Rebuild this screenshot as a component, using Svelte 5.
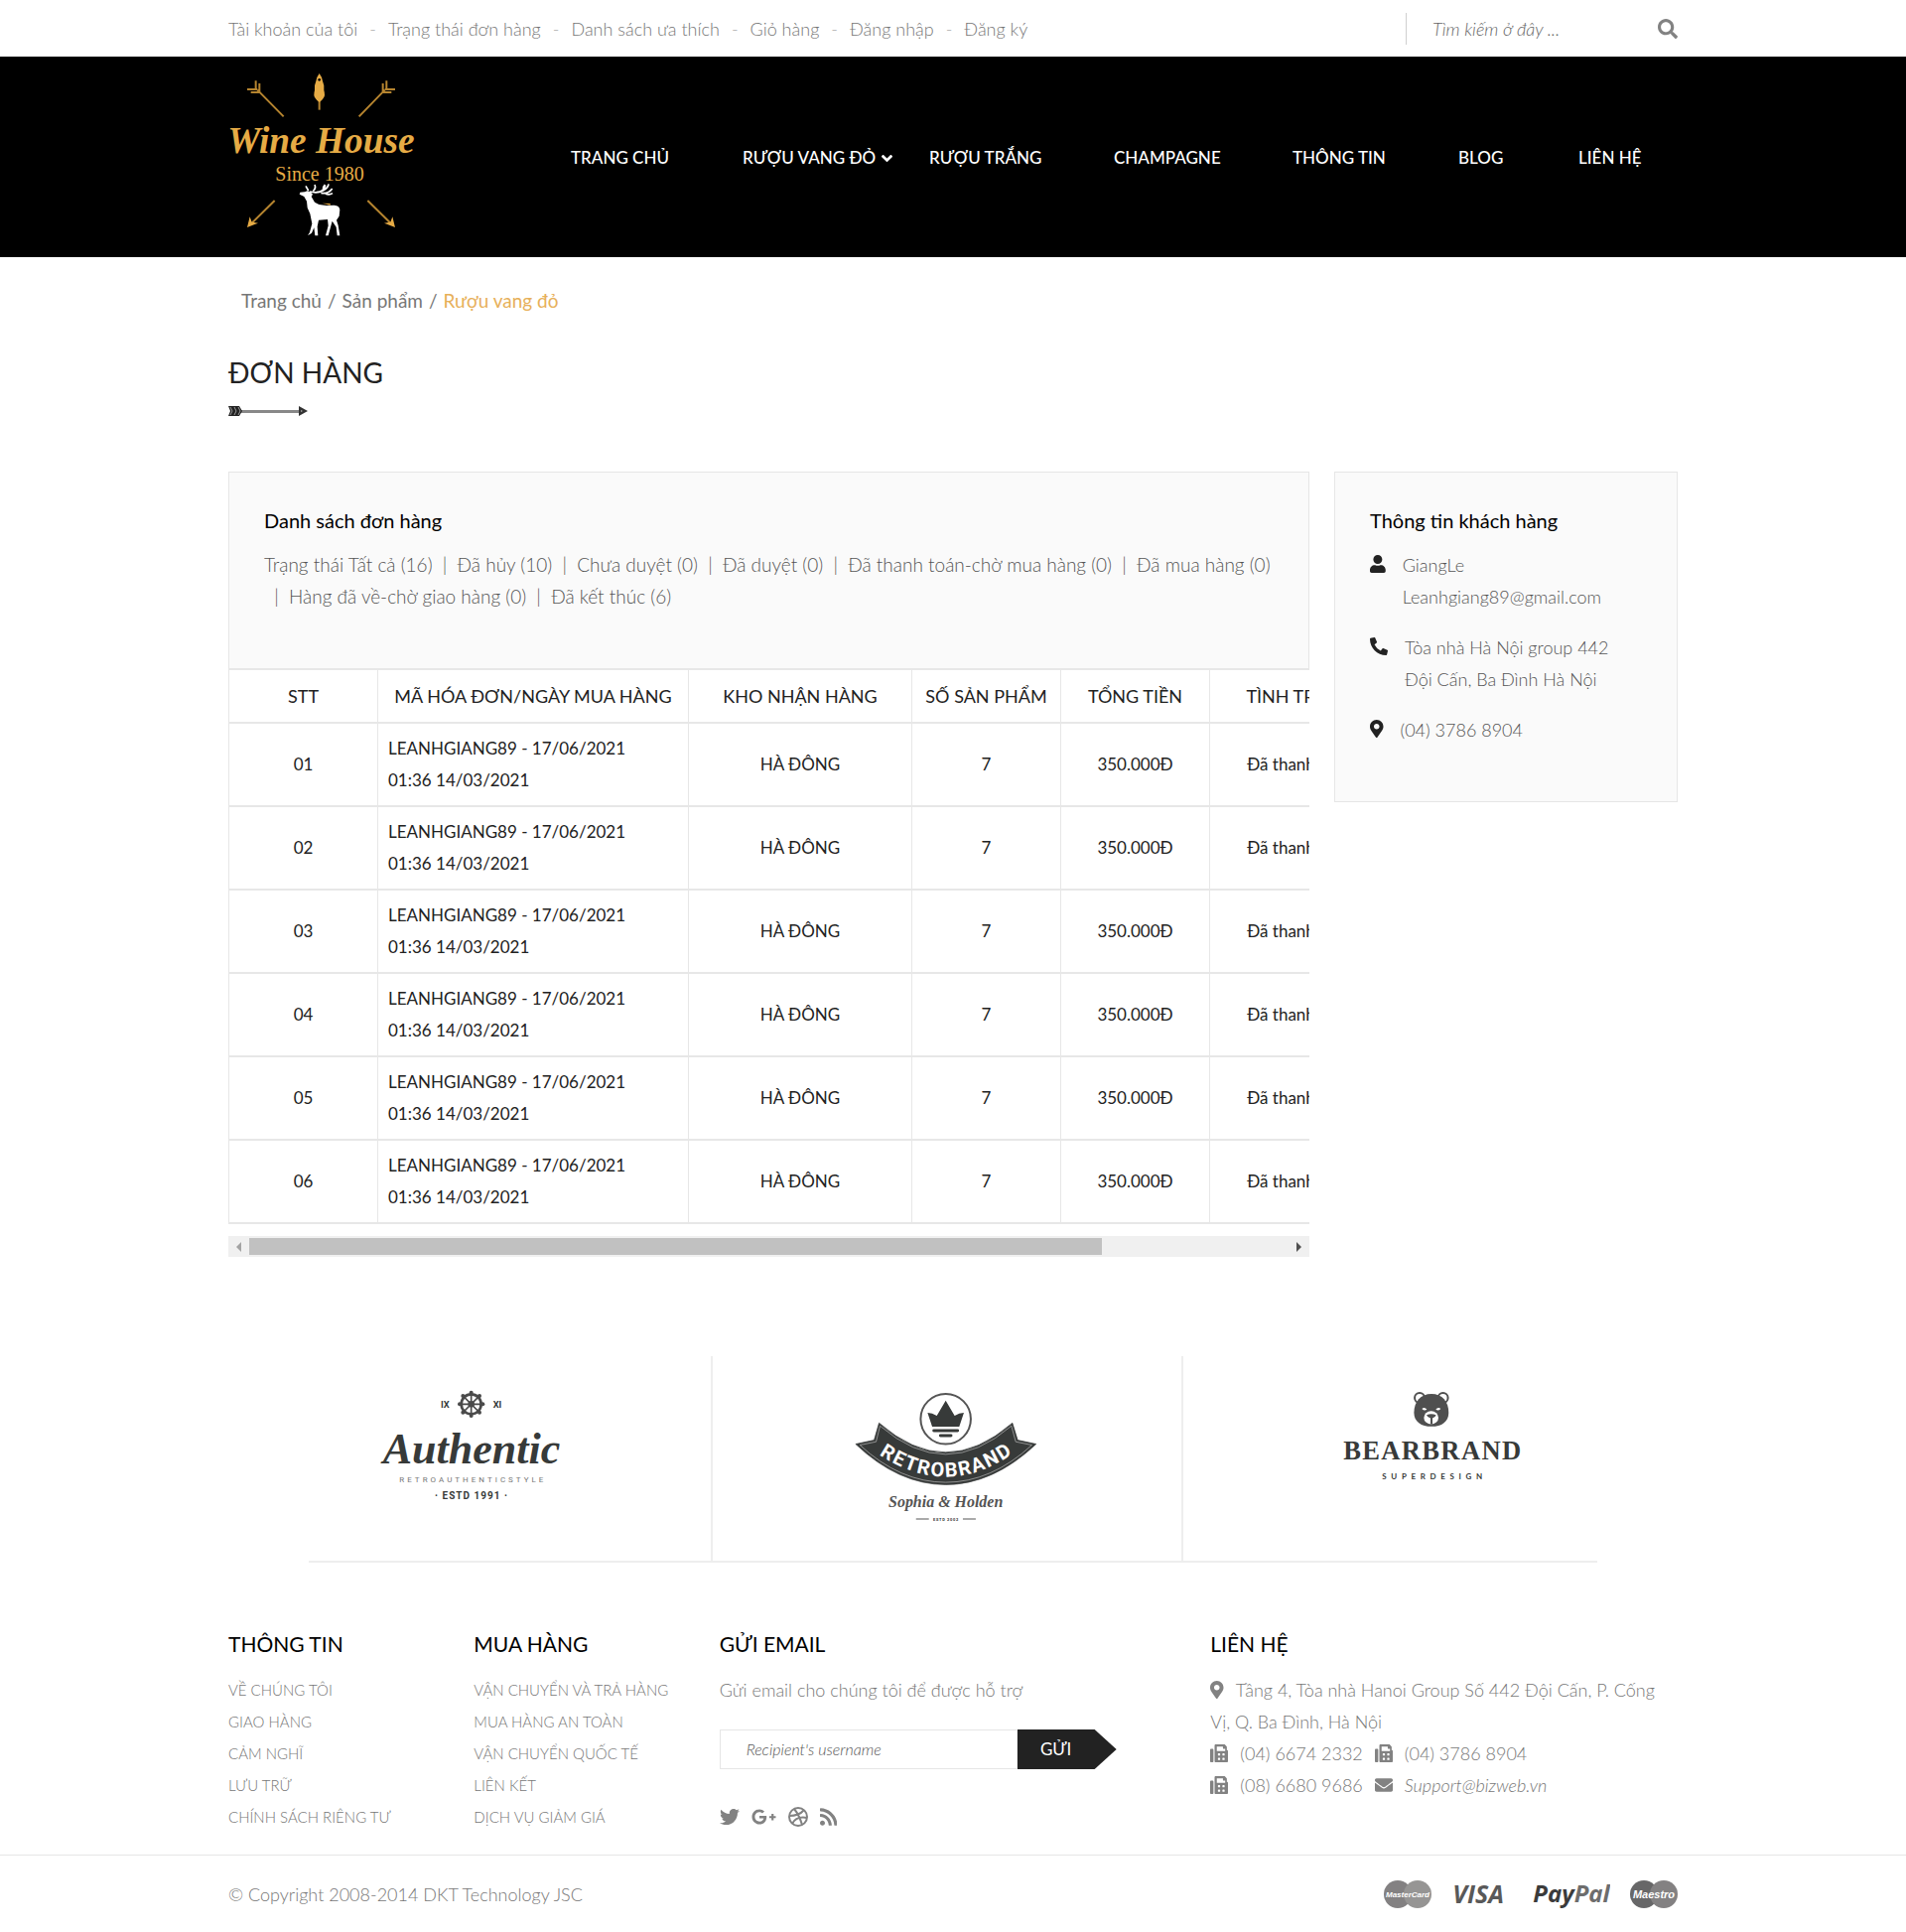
<script>
  const accountLinks = ['Tài khoản của tôi', 'Trạng thái đơn hàng', 'Danh sách ưa thích', 'Giỏ hàng', 'Đăng nhập', 'Đăng ký'];
  const menu = ['TRANG CHỦ', 'RƯỢU VANG ĐỎ', 'RƯỢU TRẮNG', 'CHAMPAGNE', 'THÔNG TIN', 'BLOG', 'LIÊN HỆ'];
  const statuses = [
    'Trạng thái Tất cả (16)',
    'Đã hủy (10)',
    'Chưa duyệt (0)',
    'Đã duyệt (0)',
    'Đã thanh toán-chờ mua hàng (0)',
    'Đã mua hàng (0)',
    'Hàng đã về-chờ giao hàng (0)',
    'Đã kết thúc (6)'
  ];
  const orders = ['01', '02', '03', '04', '05', '06'];
  const infoLinks = ['VỀ CHÚNG TÔI', 'GIAO HÀNG', 'CẢM NGHĨ', 'LƯU TRỮ', 'CHÍNH SÁCH RIÊNG TƯ'];
  const shopLinks = ['VẬN CHUYỂN VÀ TRẢ HÀNG', 'MUA HÀNG AN TOÀN', 'VẬN CHUYỂN QUỐC TẾ', 'LIÊN KẾT', 'DỊCH VỤ GIẢM GIÁ'];

  const icons = {
    search: ['0 0 512 512', 'M505 442.700L405.300 343c-4.500-4.500-10.600-7-17-7H372c27.600-35.300 44-79.700 44-128C416 93.100 322.900 0 208 0S0 93.100 0 208s93.100 208 208 208c48.300 0 92.700-16.400 128-44v16.300c0 6.400 2.500 12.500 7 17l99.700 99.700c9.400 9.400 24.600 9.400 33.900 0l28.300-28.300c9.400-9.400 9.400-24.600.1-34zM208 336c-70.700 0-128-57.200-128-128 0-70.700 57.200-128 128-128 70.700 0 128 57.200 128 128 0 70.700-57.200 128-128 128z'],
    down: ['0 96 320 320', 'M143 352.300L7 216.300c-9.400-9.400-9.400-24.600 0-33.900l22.600-22.600c9.400-9.400 24.600-9.400 33.900 0l96.400 96.400 96.400-96.400c9.400-9.400 24.600-9.400 33.900 0l22.600 22.600c9.400 9.400 9.400 24.600 0 33.900l-136 136c-9.200 9.400-24.400 9.400-33.800 0z'],
    user: ['0 0 448 512', 'M224 256c70.700 0 128-57.300 128-128S294.700 0 224 0 96 57.300 96 128s57.300 128 128 128zm89.600 32h-16.700c-22.200 10.200-46.900 16-72.900 16s-50.600-5.800-72.900-16h-16.700C60.200 288 0 348.200 0 422.400V464c0 26.500 21.500 48 48 48h352c26.500 0 48-21.500 48-48v-41.600c0-74.200-60.200-134.400-134.400-134.400z'],
    phone: ['0 0 512 512', 'M497.390 361.800l-112-48a24 24 0 0 0-28 6.900l-49.600 60.600A370.660 370.660 0 0 1 130.600 204.110l60.600-49.600a23.940 23.940 0 0 0 6.900-28l-48-112A24.160 24.160 0 0 0 122.600.610l-104 24A24 24 0 0 0 0 48c0 256.500 207.900 464 464 464a24 24 0 0 0 23.400-18.600l24-104a24.290 24.290 0 0 0-14.010-27.600z'],
    pin: ['0 0 384 512', 'M172.268 501.670C26.970 291.031 0 269.413 0 192 0 85.961 85.961 0 192 0s192 85.961 192 192c0 77.413-26.970 99.031-172.268 309.670-9.535 13.774-29.930 13.773-39.464 0zM192 272c44.183 0 80-35.817 80-80s-35.817-80-80-80-80 35.817-80 80 35.817 80 80 80z'],
    fax: ['0 0 512 512', 'M64 128H32c-17.670 0-32 14.330-32 32v320c0 17.670 14.330 32 32 32h32c17.670 0 32-14.330 32-32V160c0-17.670-14.330-32-32-32zm416 32V77.250c0-8.490-3.370-16.620-9.370-22.630L425.370 9.370c-6-6-14.140-9.370-22.630-9.370H160c-17.670 0-32 14.330-32 32v448c0 17.670 14.330 32 32 32h320c17.670 0 32-14.330 32-32V192c0-17.670-14.330-32-32-32zM288 432c0 8.840-7.160 16-16 16h-32c-8.840 0-16-7.160-16-16v-32c0-8.840 7.160-16 16-16h32c8.840 0 16 7.160 16 16v32zm0-128c0 8.840-7.160 16-16 16h-32c-8.840 0-16-7.160-16-16v-32c0-8.840 7.160-16 16-16h32c8.840 0 16 7.160 16 16v32zm128 128c0 8.840-7.160 16-16 16h-32c-8.840 0-16-7.160-16-16v-32c0-8.840 7.160-16 16-16h32c8.840 0 16 7.160 16 16v32zm0-128c0 8.840-7.160 16-16 16h-32c-8.840 0-16-7.160-16-16v-32c0-8.840 7.160-16 16-16h32c8.840 0 16 7.160 16 16v32zM432 192H192V64h176v48c0 8.840 7.160 16 16 16h48z'],
    mail: ['0 0 512 512', 'M502.300 190.800c3.900-3.100 9.700-.2 9.700 4.700V400c0 26.500-21.500 48-48 48H48c-26.500 0-48-21.500-48-48V195.600c0-5 5.700-7.800 9.700-4.700 22.400 17.400 52.100 39.500 154.100 113.600 21.100 15.400 56.700 47.800 92.200 47.600 35.700.3 72-32.800 92.300-47.600 102-74.100 131.600-96.300 154-113.700zM256 320c23.200.4 56.600-29.200 73.400-41.400 132.700-96.300 142.800-104.700 173.400-128.700 5.800-4.500 9.200-11.500 9.200-18.900v-19c0-26.500-21.500-48-48-48H48c-26.500 0-48 21.500-48 48v19c0 7.400 3.400 14.300 9.200 18.900 30.600 23.900 40.700 32.400 173.400 128.700 16.800 12.200 50.200 41.800 73.400 41.400z'],
    twitter: ['0 0 512 512', 'M459.370 151.716c.325 4.548.325 9.097.325 13.645 0 138.720-105.583 298.558-298.558 298.558-59.452 0-114.680-17.219-161.137-47.106 8.447.974 16.568 1.299 25.340 1.299 49.055 0 94.213-16.568 130.274-44.832-46.132-.975-84.792-31.188-98.112-72.772 6.498.974 12.995 1.624 19.818 1.624 9.421 0 18.843-1.300 27.614-3.573-48.081-9.747-84.143-51.980-84.143-102.985v-1.299c13.969 7.797 30.214 12.670 47.431 13.319-28.264-18.843-46.781-51.005-46.781-87.391 0-19.492 5.197-37.360 14.294-52.954 51.655 63.675 129.300 105.258 216.365 109.807-1.624-7.797-2.599-15.918-2.599-24.040 0-57.828 46.782-104.934 104.934-104.934 30.213 0 57.502 12.670 76.670 33.137 23.715-4.548 46.456-13.320 66.599-25.340-7.798 24.366-24.366 44.833-46.132 57.827 21.117-2.273 41.584-8.122 60.426-16.243-14.292 20.791-32.161 39.308-52.628 54.253z'],
    google: ['0 0 640 512', 'M386.061 228.496c1.834 9.692 3.143 19.384 3.143 31.956C389.204 370.205 315.599 448 204.800 448c-106.084 0-192-85.915-192-192s85.916-192 192-192c51.864 0 95.083 18.859 128.611 50.292l-52.126 50.030c-14.145-13.621-39.028-29.599-76.485-29.599-65.484 0-118.920 54.221-118.920 121.277 0 67.056 53.436 121.277 118.920 121.277 75.961 0 104.513-54.745 108.965-82.773H204.800v-66.009h181.261zm185.406 6.437V179.200h-56.001v55.733h-55.733v56.001h55.733v55.733h56.001v-55.733H627.200v-56.001h-55.733z'],
    rss: ['0 0 448 512', 'M128.081 415.959c0 35.369-28.672 64.041-64.041 64.041S0 451.328 0 415.959s28.672-64.041 64.041-64.041 64.040 28.673 64.040 64.041zm175.660 47.250c-8.354-154.600-132.185-278.587-286.950-286.950C7.656 175.765 0 183.105 0 192.253v48.069c0 8.415 6.490 15.472 14.887 16.018 111.832 7.284 201.473 96.702 208.772 208.772.547 8.397 7.604 14.887 16.018 14.887h48.069c9.149.001 16.489-7.655 15.995-16.790zm144.249.288C439.596 229.677 251.465 40.445 16.503 32.010 7.473 31.686 0 38.981 0 48.016v48.068c0 8.625 6.835 15.645 15.453 15.999 191.179 7.839 344.627 161.316 352.465 352.465.353 8.618 7.373 15.453 15.999 15.453h48.068c9.034-.001 16.329-7.474 16.005-16.504z']
  };

  let scroller;
  let scrollLeft = $state(0);
  let contentWidth = $state(1327);
  let viewWidth = $state(1089);
  let thumbWidth = $derived(Math.min(100, (viewWidth / contentWidth) * 100));
  let thumbLeft = $derived((scrollLeft / contentWidth) * 100);

  function move(step) {
    scroller.scrollLeft += step;
  }
</script>

{#snippet icon(name, cls)}
  <svg class="icon {cls}" viewBox={icons[name][0]} aria-hidden="true"><path d={icons[name][1]} /></svg>
{/snippet}

<div class="topbar">
  <div class="container topbar-row">
    <ul class="account">
      {#each accountLinks as link}
        <li><a href="#account">{link}</a></li>
      {/each}
    </ul>
    <form class="search" onsubmit={(e) => e.preventDefault()}>
      <input type="search" aria-label="Tìm kiếm" placeholder="Tìm kiếm ở đây ..." />
      <button type="submit" aria-label="Tìm">{@render icon('search', 'i20')}</button>
    </form>
  </div>
</div>

<header>
  <div class="container header-row">
    <a class="logo" href="#home" aria-label="Wine House">
      <svg viewBox="30 30 570 510" width="190" height="170">
        <g fill="none" stroke="#b5842f" stroke-width="6">
          <path d="M197 172L118 92M87 90h31M113 64v28M98 99h27M124 72v27" />
          <path d="M425 172L503 92M534 90h-31M508 64v28M523 99h-27M497 72v27" />
          <path d="M170 426L100 495M451 426L521 495" />
          <path d="M305 120v32" />
        </g>
        <g fill="#e6ab45">
          <path d="M305 42q9 12 10 23q6 12 4 28q5 16-2 24q-5 8-12 12q-7-4-12-12q-7-8-2-24q-2-16 4-28q1-11 10-23z" />
          <path d="M87 507l8-32 6 16 19 3zM534 507l-8-32-6 16-19 3z" />
        </g>
        <circle cx="305" cy="61" r="4" fill="#000" />
        <text class="script" x="310" y="283">Wine House</text>
        <text class="since" x="306" y="365">Since 1980</text>
        <path fill="#fff" d="M245 403l2-6 14-1 8-3 9 3 7 7-4 7 10 17 13 7 22 3 24-1q16 1 17 14l-2 19-8 12 5 16 5 31h-8l-3-26-12-18-6 22-6 22h-8l8-30-2-19-27 2-4 20 2 27h-9l-3-24-7 16-12 8 6-10 7-26-6-30-8-18-2-20-8-14z" transform="translate(0 4)" />
        <path fill="none" stroke="#fff" stroke-width="5" d="M272 396l-8-14M276 399q24 6 40-3t17-20M296 401q24-2 27-22M310 403q22 4 34-13M286 397q10-8 5-19M318 395q-4-8 4-17M324 406q12 4 21-2" />
        <path fill="#e6ab45" d="M314 434l24 1v5z" />
      </svg>
    </a>
    <nav>
      {#each menu as item, i}
        <a href="#menu">{item}{#if i === 1}{@render icon('down', 'i11')}{/if}</a>
      {/each}
    </nav>
  </div>
</header>

<main class="container">
  <div class="crumbs">
    <a href="#home">Trang chủ</a><span>/</span><a href="#products">Sản phẩm</a><span>/</span><a class="current" href="#red">Rượu vang đỏ</a>
  </div>

  <h1>ĐƠN HÀNG</h1>
  <svg class="arrow" viewBox="0 0 80 10" width="80" height="10" aria-hidden="true">
    <path d="M12 4h60v3H12z" fill="#888" />
    <path d="M0 0h11l3 5-3 5H0l2-5z" fill="#222" />
    <path d="M2 1l2 4-2 4M6 1l2 4-2 4M10 1l2 4-2 4" fill="none" stroke="#999" />
    <path d="M71 0l9 5-9 5z" fill="#333" />
    <path d="M73 4l2 1-2 1z" fill="#aaa" />
  </svg>

  <div class="columns">
    <section class="orders">
      <div class="panel">
        <h2>Danh sách đơn hàng</h2>
        <ul class="statuses">
          {#each statuses as status, i}
            <li>{#if i > 0}<span class="bar">|</span>{/if}<a href="#status">{status}</a></li>
          {/each}
        </ul>
      </div>
      <div
        class="scroller"
        bind:this={scroller}
        bind:clientWidth={viewWidth}
        onscroll={() => (scrollLeft = scroller.scrollLeft)}
      >
        <table bind:offsetWidth={contentWidth}>
          <colgroup>
            <col class="c150" /><col class="c313" /><col class="c225" /><col class="c150" /><col class="c150" /><col class="c182" /><col />
          </colgroup>
          <thead>
            <tr>
              <th>STT</th>
              <th>MÃ HÓA ĐƠN/NGÀY MUA HÀNG</th>
              <th>KHO NHẬN HÀNG</th>
              <th>SỐ SẢN PHẨM</th>
              <th>TỔNG TIỀN</th>
              <th>TÌNH TRẠNG</th>
              <th></th>
            </tr>
          </thead>
          <tbody>
            {#each orders as order}
              <tr>
                <td>{order}</td>
                <td class="code">LEANHGIANG89 - 17/06/2021<br />01:36 14/03/2021</td>
                <td>HÀ ĐÔNG</td>
                <td>7</td>
                <td>350.000Đ</td>
                <td>Đã thanh toán</td>
                <td></td>
              </tr>
            {/each}
          </tbody>
        </table>
      </div>
      <div class="scrollbar">
        <button type="button" class="left" aria-label="Cuộn trái" onclick={() => move(-80)}></button>
        <div class="track"><div class="thumb" style:width="{thumbWidth}%" style:margin-left="{thumbLeft}%"></div></div>
        <button type="button" class="right" aria-label="Cuộn phải" onclick={() => move(80)}></button>
      </div>
    </section>

    <aside>
      <h2>Thông tin khách hàng</h2>
      <div class="info">{@render icon('user', 'i18')}<p>GiangLe<br />Leanhgiang89@gmail.com</p></div>
      <div class="info">{@render icon('phone', 'i18')}<p>Tòa nhà Hà Nội group 442<br />Đội Cấn, Ba Đình Hà Nội</p></div>
      <div class="info">{@render icon('pin', 'i18')}<p>(04) 3786 8904</p></div>
    </aside>
  </div>

  <div class="brands">
    <div class="brand first">
      <svg viewBox="39 60 552 336" width="184" height="112" role="img" aria-label="Authentic">
        <g fill="none" stroke="#4a4a4a">
          <circle cx="314" cy="103" r="30" stroke-width="8" />
          <path stroke-width="5" d="M314 66v74M277 103h74M288 77l52 52M340 77l-52 52" />
        </g>
        <g fill="#4a4a4a">
          <circle cx="314" cy="103" r="10" />
          <circle cx="314" cy="68" r="6" /><circle cx="314" cy="138" r="6" /><circle cx="279" cy="103" r="6" /><circle cx="349" cy="103" r="6" />
          <circle cx="289" cy="78" r="6" /><circle cx="339" cy="78" r="6" /><circle cx="289" cy="128" r="6" /><circle cx="339" cy="128" r="6" />
        </g>
        <text class="b-roman" x="235" y="113">IX</text>
        <text class="b-roman" x="393" y="113">XI</text>
        <text class="b-authentic" x="315" y="281">Authentic</text>
        <text class="b-style" x="319" y="338">RETROAUTHENTICSTYLE</text>
        <text class="b-estd" x="315" y="389">· ESTD 1991 ·</text>
      </svg>
    </div>
    <div class="brand second">
      <svg viewBox="62 60 552 400" width="184" height="133" role="img" aria-label="Retrobrand Sophia &amp; Holden">
        <circle cx="337" cy="148" r="76" fill="none" stroke="#555" stroke-width="6" />
        <path fill="#373a39" d="M282 129q14 0 28 9l27-46 27 46q14-9 28-9l-14 42h-82z" />
        <path fill="none" stroke="#373a39" stroke-width="9" stroke-linecap="round" d="M301 183h72M321 198h32" />
        <path fill="#373a39" stroke="#373a39" stroke-width="2" d="M135 160Q237 249 337 249T539 160L555 212 611 224Q480 347 337 347T64 224L120 212z" />
        <path fill="none" stroke="#bbb" stroke-width="2" d="M138 169Q238 255 337 255T536 169L549 217 598 227Q475 340 337 340T77 227L126 217z" />
        <path id="ribbon" fill="none" d="M118 243Q225 323 337 323T561 238" />
        <text class="b-retro"><textPath href="#ribbon" startOffset="50%">RETROBRAND</textPath></text>
        <text class="b-sophia" x="337" y="414">Sophia &amp; Holden</text>
        <path stroke="#555" stroke-width="3" d="M247 451h39M389 451h39" />
        <text class="b-tiny" x="338" y="456">ESTD 2002</text>
      </svg>
    </div>
    <div class="brand third">
      <svg viewBox="153 60 555 280" width="185" height="93" role="img" aria-label="Bearbrand Superdesign">
        <g fill="#fff" stroke="#4f4f4f" stroke-width="6">
          <circle cx="393" cy="84" r="15" /><circle cx="464" cy="84" r="15" />
        </g>
        <path fill="#4f4f4f" d="M429 72C462 72 481 96 481 129C481 156 460 171 429 171S376 156 376 129C376 96 396 72 429 72z" />
        <path fill="#fff" d="M400 117q8-6 15 2-7 7-15-2zM442 119q7-8 15-2-8 9-15 2z" />
        <ellipse cx="428" cy="144" rx="22" ry="20" fill="#fff" />
        <path fill="#4f4f4f" d="M414 136q14-6 29 0-3 8-11 10v18h-6v-18q-9-2-12-10z" />
        <text class="b-bear" x="433" y="270">BEARBRAND</text>
        <text class="b-super" x="438" y="332">SUPERDESIGN</text>
      </svg>
    </div>
  </div>
</main>

<footer>
  <div class="container footer-grid">
    <section>
      <h3>THÔNG TIN</h3>
      <ul class="links">{#each infoLinks as link}<li><a href="#info">{link}</a></li>{/each}</ul>
    </section>
    <section>
      <h3>MUA HÀNG</h3>
      <ul class="links">{#each shopLinks as link}<li><a href="#shop">{link}</a></li>{/each}</ul>
    </section>
    <section class="wide">
      <h3>GỬI EMAIL</h3>
      <p>Gửi email cho chúng tôi để được hỗ trợ</p>
      <form class="subscribe" onsubmit={(e) => e.preventDefault()}>
        <input type="text" aria-label="Email" placeholder="Recipient's username" />
        <button type="submit">GỬI</button>
      </form>
      <div class="social">
        <a href="#twitter" aria-label="Twitter">{@render icon('twitter', 'i20')}</a>
        <a href="#google" aria-label="Google Plus">{@render icon('google', 'i20')}</a>
        <a href="#dribbble" aria-label="Dribbble">
          <svg class="stroke" viewBox="0 0 20 20" width="20" height="20" aria-hidden="true">
            <circle cx="10" cy="10" r="9" />
            <path d="M6 2q5 6 8 16M1 9q10 0 15-6M4 17q4-8 15-6" />
          </svg>
        </a>
        <a href="#rss" aria-label="RSS">{@render icon('rss', 'i20')}</a>
      </div>
    </section>
    <section class="wide contact">
      <h3>LIÊN HỆ</h3>
      <p>{@render icon('pin', 'i18')}Tầng 4, Tòa nhà Hanoi Group Số 442 Đội Cấn, P. Cống Vị, Q. Ba Đình, Hà Nội</p>
      <p>{@render icon('fax', 'i18')}<span>(04) 6674 2332</span>{@render icon('fax', 'i18')}<span>(04) 3786 8904</span></p>
      <p>{@render icon('fax', 'i18')}<span>(08) 6680 9686</span>{@render icon('mail', 'i18')}<a class="mail" href="#mail">Support@bizweb.vn</a></p>
    </section>
  </div>
  <div class="bottom">
    <div class="container bottom-row">
      <p>© Copyright 2008-2014 DKT Technology JSC</p>
      <div class="cards">
        <svg viewBox="0 0 48 28" width="48" height="28" role="img" aria-label="MasterCard">
          <circle cx="14" cy="14" r="14" fill="#838182" /><circle cx="34" cy="14" r="14" fill="#969594" />
          <text class="c-master" x="24" y="17">MasterCard</text>
        </svg>
        <svg viewBox="0 0 62 28" width="62" height="28" role="img" aria-label="VISA">
          <text class="c-visa" x="27" y="23">VISA</text>
        </svg>
        <svg viewBox="0 0 78 28" width="78" height="28" role="img" aria-label="PayPal">
          <text class="c-paypal" x="39" y="22"><tspan fill="#3b3b3b">Pay</tspan><tspan fill="#6d6d6d">Pal</tspan></text>
        </svg>
        <svg viewBox="0 0 48 28" width="48" height="28" role="img" aria-label="Maestro">
          <circle cx="14" cy="14" r="14" fill="#676768" /><circle cx="34" cy="14" r="14" fill="#838182" />
          <text class="c-maestro" x="24" y="18">Maestro</text>
        </svg>
      </div>
    </div>
  </div>
</footer>

<style>
  :global(body) {
    background: #fff;
    color: #222;
    font: 300 18px/32px Lato, 'Open Sans', sans-serif;
  }
  :global(*) { box-sizing: border-box; }
  a { color: inherit; text-decoration: none; }
  ul { list-style: none; margin: 0; padding: 0; }
  p, h1, h2, h3 { margin: 0; }
  input, button { font: inherit; border: 0; padding: 0; background: none; border-radius: 0; }
  button { cursor: pointer; }
  .container { width: 100%; max-width: 1508px; margin: 0 auto; padding: 0 24px; }
  .icon { fill: currentColor; flex: none; }
  .i11 { height: 11px; }
  .i18 { height: 18px; }
  .i20 { height: 20px; }

  .topbar { color: #777; }
  .topbar-row { display: flex; justify-content: space-between; align-items: center; height: 57px; }
  .account { display: flex; }
  .account li + li::before { content: '-'; padding: 0 12px; color: #aaa; }
  .search { display: flex; align-items: center; width: 274px; height: 32px; border-left: 1px solid #d0d0d0; padding-left: 26px; }
  .search input { flex: 1; min-width: 0; font-style: italic; outline: none; }
  .search input::placeholder { color: #666; opacity: 1; }
  .search button { display: flex; color: #828282; }

  header { background: #000; }
  .header-row { display: flex; justify-content: space-between; align-items: center; height: 202px; }
  .logo { display: flex; padding-bottom: 6px; }
  .script { font: italic 700 112px 'Liberation Serif', serif; fill: #e6ab45; text-anchor: middle; }
  .since { font: 400 60px 'Liberation Serif', serif; fill: #e6ab45; text-anchor: middle; }
  nav { display: grid; grid-template-columns: 173fr 188fr 186fr 180fr 167fr 121fr 100fr; width: 1115px; padding-top: 2px; }
  nav a { display: flex; align-items: center; gap: 6px; color: #fff; font-size: 17px; font-weight: 500; white-space: nowrap; }

  .crumbs { display: flex; gap: 6px; padding: 28px 13px 0; color: #777; font-size: 19px; font-weight: 400; }
  .crumbs .current { color: #e7b05a; }
  h1 { margin-top: 36px; font-size: 28px; line-height: 40px; font-weight: 400; }
  .arrow { display: block; margin-top: 14px; }

  .columns { display: grid; grid-template-columns: minmax(0, 1089fr) minmax(0, 346fr); gap: 25px; align-items: start; margin-top: 56px; }
  .orders { min-width: 0; }
  .panel, aside { background: #fafafa; border: 1px solid #e6e6e6; color: #555; }
  .panel { min-height: 198px; padding: 32px 30px 0 35px; border-bottom: 0; }
  h2 { font-size: 20px; line-height: 32px; font-weight: 400; color: #000; margin-bottom: 13px; }
  .statuses { display: flex; flex-wrap: wrap; font-size: 19px; }
  .bar { display: inline-block; width: 25px; text-align: center; }
  .scroller { overflow: hidden; }
  table { width: 1327px; table-layout: fixed; border-collapse: separate; border-spacing: 0; border-left: 1px solid #e7e7e7; border-top: 2px solid #e7e7e7; font-weight: 400; }
  .c150 { width: 150px; }
  .c313 { width: 313px; }
  .c225 { width: 225px; }
  .c182 { width: 182px; }
  th, td { border-right: 1px solid #e7e7e7; border-bottom: 2px solid #e7e7e7; padding: 9px 10px; text-align: center; white-space: nowrap; }
  th { font-size: 18px; font-weight: 400; height: 54px; padding: 0; }
  td { font-size: 17px; height: 84px; }
  td.code { text-align: left; }

  .scrollbar { display: flex; align-items: center; height: 21px; margin-top: 12px; background: #f0f0f0; }
  .track { flex: 1; height: 17px; }
  .thumb { height: 17px; background: #c1c1c1; }
  .scrollbar button { display: flex; align-items: center; justify-content: center; width: 21px; height: 21px; }
  .scrollbar button::before { content: ''; border: 5px solid transparent; }
  .scrollbar .left::before { border-right-color: #a3a3a3; border-left-width: 0; }
  .scrollbar .right::before { border-left-color: #505050; border-right-width: 0; }

  aside { padding: 32px 35px 37px; }
  .info { display: flex; gap: 17px; margin-bottom: 19px; }
  .info .icon { color: #222; margin-top: 6px; }

  .brands { display: grid; grid-template-columns: 405fr 474fr 419fr; height: 208px; margin: 100px 81px 0; border-bottom: 2px solid #eee; }
  .brand { padding-top: 34px; }
  .brand + .brand { border-left: 2px solid #eee; }
  .first { padding-left: 72px; }
  .second { padding-left: 143px; }
  .third { padding-left: 158px; }
  .brand text { text-anchor: middle; fill: #373a39; }
  .b-roman { font: 700 28px Roboto, sans-serif; }
  .b-authentic { font: italic 700 132px 'Liberation Serif', serif; }
  .brand .b-style { font: 400 24px Roboto, sans-serif; letter-spacing: 9px; fill: #777; }
  .b-estd { font: 700 30px Roboto, sans-serif; letter-spacing: 3px; }
  .brand .b-retro { font: 700 60px Roboto, sans-serif; letter-spacing: 5px; fill: #fff; }
  .brand .b-sophia { font: italic 700 48px 'Liberation Serif', serif; fill: #555; }
  .b-tiny { font: 700 12px Roboto, sans-serif; letter-spacing: 2px; }
  .b-bear { font: 700 80px 'Liberation Serif', serif; letter-spacing: 4px; }
  .b-super { font: 700 24px Lato, sans-serif; letter-spacing: 14px; }

  footer { color: #777; margin-top: 66px; }
  .footer-grid { display: grid; grid-template-columns: repeat(6, minmax(0, 1fr)); column-gap: 24px; }
  .wide { grid-column: span 2; }
  h3 { font-size: 21px; line-height: 32px; font-weight: 400; color: #000; margin-bottom: 14px; }
  .links { font-size: 15px; white-space: nowrap; }
  .subscribe { display: flex; height: 40px; margin-top: 24px; width: 400px; }
  .subscribe input { width: 300px; border: 1px solid #e6e6e6; padding: 0 26px; font-size: 16px; font-style: italic; }
  .subscribe input::placeholder { color: #555; opacity: 1; }
  .subscribe button { width: 100px; padding-right: 22px; background: #222; color: #fff; font-size: 17px; font-weight: 400; clip-path: polygon(0 0, 78% 0, 100% 50%, 78% 100%, 0 100%); }
  .social { display: flex; align-items: center; gap: 12px; height: 32px; margin-top: 32px; color: #828282; }
  .social a { display: flex; }
  .stroke { fill: none; stroke: currentColor; stroke-width: 2; }
  .contact .icon { color: #828282; vertical-align: -2px; margin-right: 12px; }
  .contact span { margin-right: 12px; }
  .mail { font-style: italic; }
  .bottom { margin-top: 22px; border-top: 1px solid #e6e6e6; }
  .bottom-row { display: flex; justify-content: space-between; align-items: center; height: 77px; }
  .cards { display: flex; gap: 20px; align-items: center; }
  .cards text { text-anchor: middle; }
  .c-master { font: italic 700 8px 'Liberation Sans', sans-serif; fill: #fff; }
  .c-visa { font: italic 700 25px 'Open Sans', sans-serif; fill: #595959; }
  .c-paypal { font: italic 700 24px 'Open Sans', sans-serif; }
  .c-maestro { font: italic 700 11px 'Liberation Sans', sans-serif; fill: #fff; }
</style>
